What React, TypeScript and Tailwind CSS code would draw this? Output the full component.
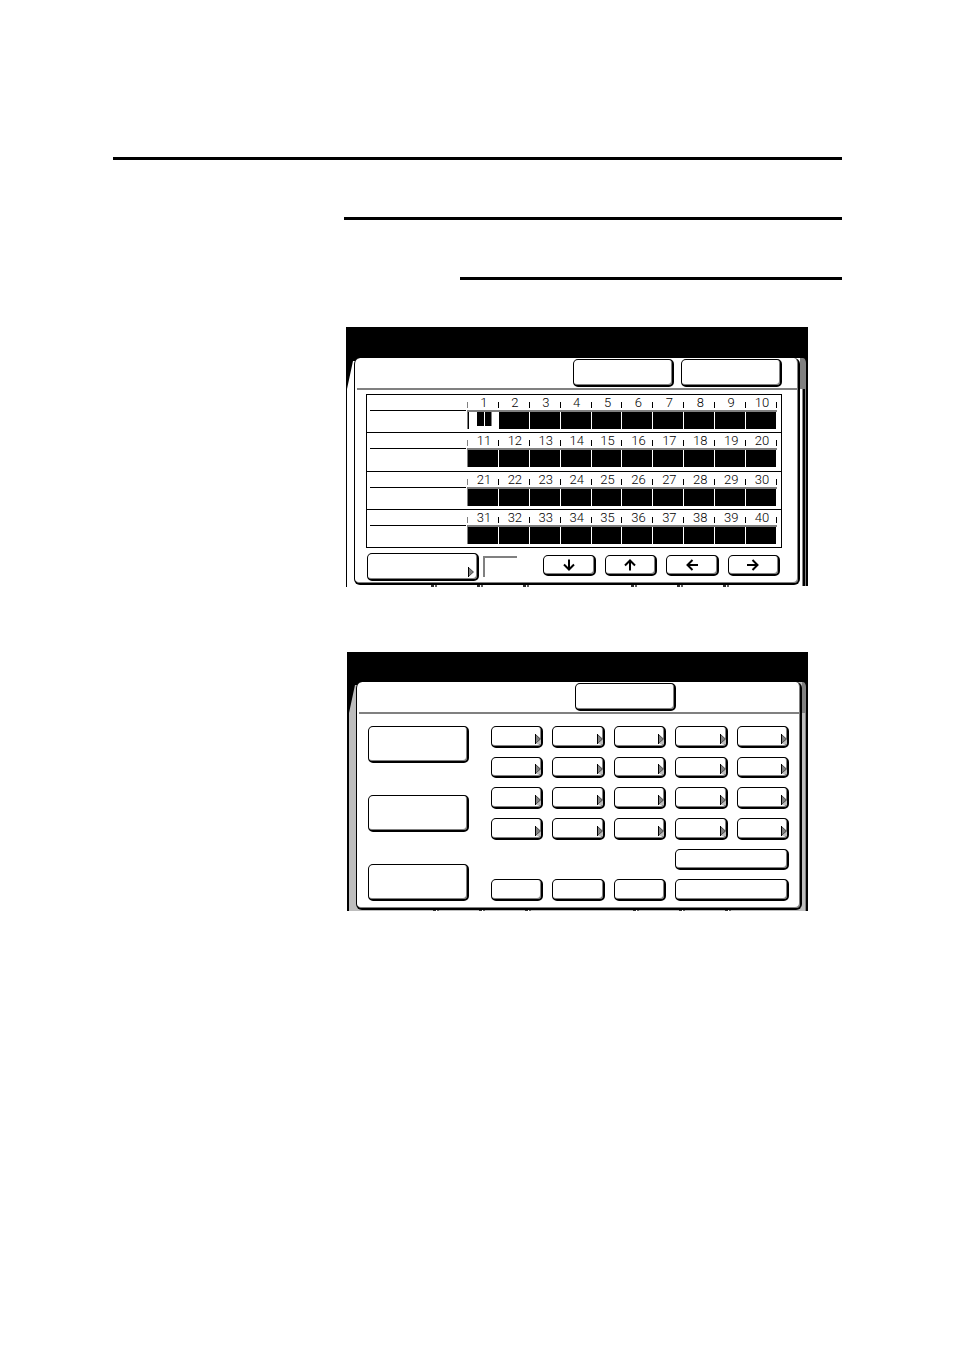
import React from 'react';

type KeyProps = { label: string; className?: string; more?: 'edge' | 'inset'; children?: React.ReactNode };

function Key({ label, className = '', more, children }: KeyProps) {
  return (
    <button
      type="button"
      aria-label={label}
      className={`relative flex items-center justify-center rounded-[5px] border border-r-2 border-b-2 border-black bg-white shadow-[inset_-1px_-1px_0_#808080] ${className}`}
    >
      {children}
      {more && (
        <svg
          className={`absolute bottom-0.5 ${more === 'edge' ? 'right-0' : 'right-[3px]'}`}
          width="6"
          height="10"
          viewBox="0 0 6 10"
          aria-hidden="true"
        >
          {more === 'edge' && <path d="M6 4v6H1z" fill="#bdbdbd" />}
          <path d="M0.5 0.5v9L5.5 5z" fill="#808080" stroke="#000" strokeWidth="0.6" />
          <path d="M0.5 0v10" stroke="#000" />
        </svg>
      )}
    </button>
  );
}

const arrows = [
  { label: 'Down', d: 'M6 0.5v10M1 5.5l5 5 5-5' },
  { label: 'Up', d: 'M6 11.5v-10M1 6.5l5-5 5 5' },
  { label: 'Left', d: 'M12 6H1.5M6.5 1l-5 5 5 5' },
  { label: 'Right', d: 'M0 6h10.5M5.5 1l5 5-5 5' },
];

type PanelProps = { label: string; tinted?: boolean; header: React.ReactNode; children: React.ReactNode };

function BottomTicks() {
  return (
    <svg className="absolute bottom-0 left-0" width="462" height="2" viewBox="0 0 462 2" aria-hidden="true">
      {[84, 130, 176, 284, 330, 376].map((x) => (
        <g key={x}>
          <path d={`M${x} 0h3v2h-3z`} fill="#303030" />
          <path d={`M${x + 3} 0h1v2h-1z`} fill="#fff" />
          <path d={`M${x + 4} 0h2v2h-2z`} fill="#606060" />
        </g>
      ))}
    </svg>
  );
}

function Panel({ label, tinted = false, header, children }: PanelProps) {
  return (
    <section
      aria-label={label}
      className={`relative flex w-full flex-col bg-black ${tinted ? 'max-w-[461px] pt-[30px]' : 'max-w-[462px] pt-[31px]'}`}
    >
      <div
        className={`relative flex border-black ${tinted ? 'border-l-2 bg-[#bdbdbd] pb-px' : 'border-l bg-white pb-0.5'}`}
      >
        <BottomTicks />
        <div className="relative w-[7px] shrink-0">
          <svg className="absolute top-0 left-0" width="14" height="31" viewBox="0 0 14 31" aria-hidden="true">
            <path d="M0 0h14v3H6L0 31z" fill="#000" />
          </svg>
        </div>
        <div className="relative flex min-w-0 flex-1 flex-col rounded-[6px] border-r-2 border-b-2 border-l border-black bg-white shadow-[inset_-1px_-1px_0_#808080]">
          <div className="flex h-[30px] items-start pt-px">{header}</div>
          <div className="ml-0.5 h-0.5 bg-[#808080]" />
          {children}
        </div>
        <div className={`-mb-px flex shrink-0 flex-col bg-black ${tinted ? 'w-[6px]' : 'w-[8px]'}`}>
          <div className="h-[31px] rounded-tr-[5px] border-r-2 border-black bg-[#808080]" />
          {tinted ? (
            <div className="flex flex-1">
              <span className="w-[3px] bg-[#bdbdbd]" />
              <span className="w-px bg-[#808080]" />
            </div>
          ) : (
            <div className="flex flex-1">
              <span className="w-[2px] bg-white" />
              <span className="w-px bg-[#808080]" />
              <span className="w-[2px] bg-black" />
              <span className="w-px bg-[#808080]" />
            </div>
          )}
        </div>
      </div>
    </section>
  );
}

const rows = [0, 10, 20, 30];
const columns = [1, 2, 3, 4, 5, 6, 7, 8, 9, 10];

function StationRow({ start }: { start: number }) {
  return (
    <div className="flex border-b border-black pr-1 pl-[3px]">
      <div className="mt-[15px] h-px flex-1 bg-black" />
      <div className="ml-px w-[310px]">
        <div className="grid h-[15px] grid-cols-10 border-l border-transparent">
          {columns.map((c) => (
            <div key={c} className="flex items-end">
              {c === 1 && <span className="-ml-px mb-0.5 h-1.5 w-px bg-[#808080]" />}
              <span className="flex-1 pl-0.5 text-center text-[13px] leading-[15px]">{start + c}</span>
              <span className="mb-0.5 h-1.5 w-px bg-black" />
            </div>
          ))}
        </div>
        <div className="border-t-2 border-l border-[#808080]">
          <div className="grid h-[17px] grid-cols-10">
            {columns.map((c) =>
              start + c === 1 ? (
                <div key={c} className="flex gap-px border-l border-black bg-white pl-2">
                  <span className="h-3.5 w-[7px] bg-black" />
                  <span className="h-3.5 w-[7px] border-r border-[#808080] bg-black" />
                </div>
              ) : (
                <div key={c} className="border-r border-white bg-black" />
              ),
            )}
          </div>
        </div>
      </div>
    </div>
  );
}

export default function App() {
  return (
    <main className="min-h-screen bg-white pt-[157px] pr-[112px] pl-[113px] font-[Roboto,'Liberation_Sans',sans-serif] font-light text-black">
      <div className="flex flex-col gap-[57px]">
        <hr className="h-[3px] border-0 bg-black" />
        <hr className="ml-[231px] h-[3px] border-0 bg-black" />
        <hr className="ml-[347px] h-[3px] border-0 bg-black" />
      </div>

      <div className="mt-[47px] ml-[233px]">
        <Panel
          label="Stations"
          header={
            <div className="flex w-full justify-end gap-[7px] pr-4">
              <Key label="Cancel" className="h-[28px] w-[101px]" />
              <Key label="OK" className="h-[28px] w-[101px]" />
            </div>
          }
        >
          <div className="flex flex-col gap-[5px] pt-1 pr-4 pb-0.5 pl-[11px]">
            <div className="grid h-[154px] grid-rows-4 border-t border-r border-l border-black">
              {rows.map((start) => (
                <StationRow key={start} start={start} />
              ))}
            </div>
            <div className="flex pr-0.5 pl-px">
              <Key label="Select" more="inset" className="h-[28px] w-[112px]" />
              <input
                aria-label="Value"
                className="mt-[3px] ml-1 h-[21px] w-[34px] border-t-2 border-l-2 border-[#808080] bg-white text-[13px] outline-none"
              />
              <div className="mt-0.5 ml-auto grid h-[21px] w-[237px] grid-cols-4 gap-[9px]">
                {arrows.map((a) => (
                  <Key key={a.label} label={a.label}>
                    <svg width="12" height="12" viewBox="0 0 12 12" fill="none" stroke="#000" strokeWidth="2" aria-hidden="true">
                      <path d={a.d} />
                    </svg>
                  </Key>
                ))}
              </div>
            </div>
          </div>
        </Panel>
      </div>

      <div className="mt-[65px] ml-[234px]">
        <Panel
          label="Options"
          tinted
          header={
            <div className="flex w-full justify-end pr-[124px]">
              <Key label="Close" className="h-[28px] w-[101px]" />
            </div>
          }
        >
          <div className="flex justify-between pt-3 pr-[11px] pb-[7px] pl-[11px]">
            <div className="flex h-[175px] flex-col justify-between">
              {[1, 2, 3].map((n) => (
                <Key key={n} label={`Group ${n}`} className="h-[37px] w-[101px]" />
              ))}
            </div>
            <div className="grid h-[175px] w-[298px] grid-cols-5 grid-rows-6 gap-[9px]">
              {Array.from({ length: 20 }, (_, i) => (
                <Key key={i} label={`Option ${i + 1}`} more="edge" />
              ))}
              <Key label="Select all" className="col-span-2 col-start-4" />
              <Key label="Preset 1" className="col-start-1" />
              <Key label="Preset 2" />
              <Key label="Preset 3" />
              <Key label="Clear all" className="col-span-2" />
            </div>
          </div>
        </Panel>
      </div>
    </main>
  );
}
